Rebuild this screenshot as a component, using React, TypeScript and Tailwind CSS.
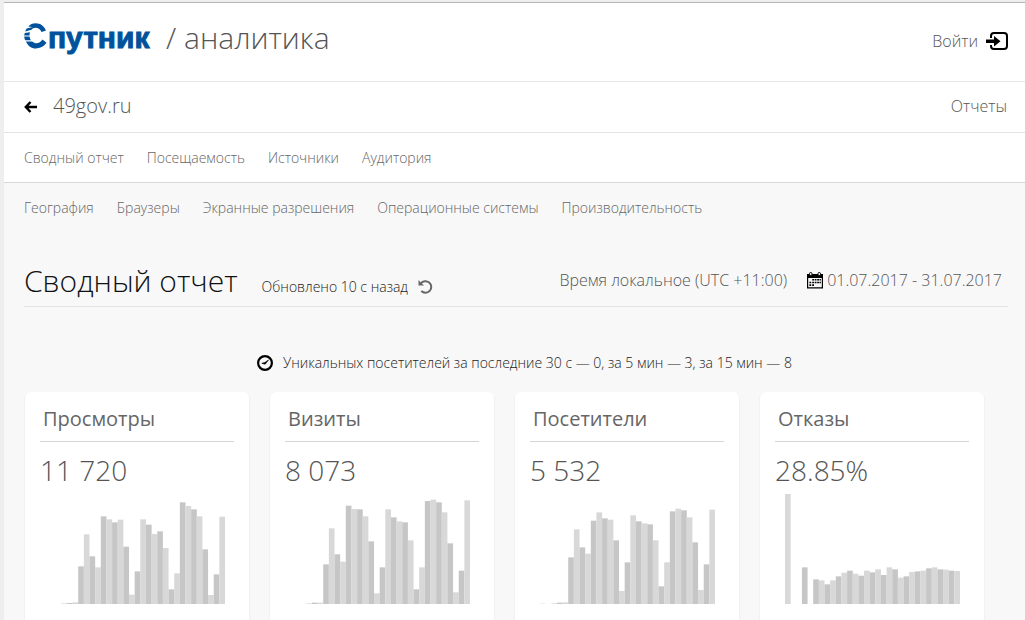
type Metric = {
  title: string;
  value: string;
  bars: number[];
};

const MAX_BAR = 330;

const metrics: Metric[] = [
  {
    title: "Просмотры",
    value: "11 720",
    bars: [
      0, 0, 2, 3, 5, 113, 209, 143, 110, 263, 254, 245, 253, 172, 28, 98, 254,
      238, 210, 218, 168, 44, 92, 305, 294, 284, 263, 164, 27, 89, 262,
    ],
  },
  {
    title: "Визиты",
    value: "8 073",
    bars: [
      0, 0, 2, 4, 4, 119, 227, 149, 127, 295, 285, 284, 263, 188, 32, 110, 284,
      260, 248, 245, 191, 44, 110, 309, 313, 305, 275, 182, 35, 100, 311,
    ],
  },
  {
    title: "Посетители",
    value: "5 532",
    bars: [
      1, 0, 2, 4, 5, 140, 224, 170, 151, 250, 275, 257, 253, 191, 39, 125, 266,
      248, 242, 239, 191, 53, 125, 278, 286, 281, 260, 185, 42, 119, 283,
    ],
  },
  {
    title: "Отказы",
    value: "28.85%",
    bars: [
      330, 0, 0, 110, 0, 74, 71, 59, 71, 83, 94, 100, 91, 85, 100, 95, 104, 87,
      110, 104, 79, 83, 96, 98, 100, 107, 110, 104, 103, 100, 99,
    ],
  },
];

const mainNav = ["Сводный отчет", "Посещаемость", "Источники", "Аудитория"];

const subNav = [
  "География",
  "Браузеры",
  "Экранные разрешения",
  "Операционные системы",
  "Производительность",
];

function Logo() {
  return (
    <a href="#" aria-label="Спутник" className="flex h-[34px] w-32 text-[#00529c]">
      <svg viewBox="0 0 24 34" className="h-[34px] w-6 shrink-0" aria-hidden="true">
        <path
          d="M22 7.500 17.600 9C16 6.200 14 4.800 11.500 4.800 9.500 4.800 8.400 5.600 7.500 6.800L1.300 8.600C1.600 7.500 2 6.500 2.600 5.600L8.500 4 4.200 3.600C6 1.300 8.500 .2 11.700 .2 16.500 .2 20 3 22 7.500Z"
          fill="currentColor"
        />
        <path
          d="M.8 9.900 6 9.300C5.700 10.200 5.500 11.200 5.500 12.400L.2 12.400C.3 11.500 .5 10.600 .8 9.900ZM.2 13.500 5.600 13.500C5.800 14.900 6.200 16.100 6.800 17.200L1.200 17.200C.6 16.100 .3 14.900 .2 13.500ZM1.900 18.400 8.200 18.400C11.500 21.500 16 20.500 18.500 16.500L22.500 19.800C20 23.500 16 25.500 11.700 25.500 7.500 25.500 4 22.800 1.900 18.400Z"
          fill="currentColor"
        />
      </svg>
      <span className="font-['Liberation_Sans',sans-serif] text-[30px] leading-[30px] font-bold [-webkit-text-stroke:1px_#00529c]">
        путник
      </span>
    </a>
  );
}

function LoginIcon() {
  return (
    <svg viewBox="0 0 22 19" className="h-[19px] w-[22px]" aria-hidden="true">
      <path
        d="M5 6V4Q5 1 8 1H18Q21 1 21 4V14Q21 17 18 17H8Q5 17 5 14V13"
        fill="none"
        stroke="#000"
        strokeWidth="2"
      />
      <path d="M0 7.500H8V4L14.500 9.200 8 14.500V11H0Z" fill="#000" />
    </svg>
  );
}

function BackIcon() {
  return (
    <svg viewBox="0 0 13 12" className="h-3 w-[13px]" aria-hidden="true">
      <path d="M6.500 1 1.800 6l4.700 5M2 6h11" fill="none" stroke="#000" strokeWidth="2.400" />
    </svg>
  );
}

function RefreshIcon() {
  return (
    <svg viewBox="0 0 15 15" className="size-[15px]" aria-hidden="true">
      <path
        d="M2.800 4.500A5.800 5.800 0 1 1 3.300 12"
        fill="none"
        stroke="#666"
        strokeWidth="2"
      />
      <path d="M.5 1V6.500H6L4.400 5 2.400 3Z" fill="#666" />
    </svg>
  );
}

function CalendarIcon() {
  return (
    <svg viewBox="0 0 16 17" className="h-[17px] w-4" aria-hidden="true">
      <path d="M0 2H16V16.500H0ZM1.200 6V15.300H14.800V6Z" fill="#000" fillRule="evenodd" />
      <rect x="2.500" y="0.500" width="2.500" height="3" rx="1.200" fill="#f8f8f8" stroke="#000" />
      <rect x="11" y="0.500" width="2.500" height="3" rx="1.200" fill="#f8f8f8" stroke="#000" />
      <path
        d="M5.200 7h1.800v1.600h-1.800zM7.700 7h1.800v1.600h-1.800zM10.200 7h1.800v1.600h-1.800zM12.500 7h1.400v1.600h-1.400zM2.400 9.700h1.800v1.600h-1.800zM5.200 9.700h1.800v1.600h-1.800zM7.700 9.700h1.800v1.600h-1.800zM10.200 9.700h1.800v1.600h-1.800zM12.500 9.700h1.400v1.600h-1.400zM2.400 12.300h1.800v1.600h-1.800zM5.200 12.300h1.800v1.600h-1.800z"
        fill="#000"
      />
    </svg>
  );
}

function ClockIcon() {
  return (
    <svg viewBox="0 0 16 16" className="size-4" aria-hidden="true">
      <circle cx="8" cy="8" r="6.900" fill="none" stroke="#000" strokeWidth="2.200" />
      <path d="M11.500 5 8.200 9.200 4.800 8.300 7.800 7.500Z" fill="#000" stroke="#000" strokeWidth="0.600" />
    </svg>
  );
}

function BarChart({ bars, label }: { bars: number[]; label: string }) {
  return (
    <svg
      viewBox={`0 0 ${bars.length} ${MAX_BAR}`}
      preserveAspectRatio="none"
      className="h-[110px] w-full"
      role="img"
      aria-label={label}
    >
      {bars.map((height, i) => (
        <rect
          key={i}
          x={i}
          y={MAX_BAR - height}
          width="1"
          height={height}
          fill={i % 2 ? "#c6c6c6" : "#d8d8d8"}
        />
      ))}
    </svg>
  );
}

function MetricCard({ title, value, bars }: Metric) {
  return (
    <article className="h-64 rounded-md bg-white px-[15px] pt-3 shadow-[0_1px_2px_rgba(0,0,0,0.1)]">
      <h2 className="border-b border-[#d5d5d5] px-[3px] pb-2 text-[20px] leading-[29px] text-[#666]">
        {title}
      </h2>
      <p className="pt-2.5 text-[28px] leading-9 font-light text-[#555]">{value}</p>
      <div className="mt-1.5 pr-[9px] pl-2.5">
        <BarChart bars={bars} label={title} />
      </div>
    </article>
  );
}

function NavLinks({ items }: { items: string[] }) {
  return (
    <>
      {items.map((item) => (
        <a key={item} href="#" className="whitespace-nowrap hover:text-black">
          {item}
        </a>
      ))}
    </>
  );
}

export default function App() {
  return (
    <div className="h-screen overflow-hidden border-l-4 border-[#eeeeee] bg-[#f8f8f8] font-['Open_Sans',sans-serif] text-[#555]">
      <div className="-ml-1 h-[3px] border-b border-[#b5b5b5] bg-[#eeeeee]" />
      <div className="bg-white">
        <header className="flex h-[79px] items-center justify-between border-b border-[#e8e8e8] pr-[17px] pb-1 pl-5">
          <div className="flex items-center gap-3.5">
            <Logo />
            <span className="pb-1 text-[30px] leading-9 font-light">/ аналитика</span>
          </div>
          <a href="#" className="flex items-center gap-2 pt-0.5 text-[16px] font-light">
            Войти
            <LoginIcon />
          </a>
        </header>
        <div className="flex h-[51px] items-center justify-between border-b border-[#e3e3e3] pr-[18px] pl-5">
          <a href="#" className="flex items-center gap-4 text-[20px] font-light">
            <BackIcon />
            <span className="pb-0.5">49gov.ru</span>
          </a>
          <a href="#" className="pb-0.5 text-[16px] font-light">
            Отчеты
          </a>
        </div>
        <nav className="flex h-[50px] items-center gap-[23px] border-b border-[#d8d8d8] pl-5 text-[14px] font-light text-[#666]">
          <NavLinks items={mainNav} />
        </nav>
      </div>
      <nav className="flex h-[50px] items-center gap-[23px] pb-0.5 pl-5 text-[14px] font-light text-[#666]">
        <NavLinks items={subNav} />
      </nav>

      <main>
        <div className="mr-[17px] ml-5 flex h-[74px] items-end justify-between border-b border-[#e3e3e3] pb-1">
          <div className="flex items-baseline gap-6">
            <h1 className="text-[30px] leading-[42px] font-light text-[#111]">Сводный отчет</h1>
            <div className="flex items-center gap-2.5 text-[14px] font-light text-[#222]">
              Обновлено 10 с назад
              <button type="button" aria-label="Обновить">
                <RefreshIcon />
              </button>
            </div>
          </div>
          <div className="flex items-center gap-5 pr-1.5 pb-2.5 text-[16px] font-light">
            <span>Время локальное (UTC +11:00)</span>
            <button type="button" className="flex items-center gap-1">
              <CalendarIcon />
              01.07.2017 - 31.07.2017
            </button>
          </div>
        </div>

        <p className="flex items-center justify-center gap-2.5 pt-[45px] pb-[19px] pl-5 text-[14px] leading-[21px] font-light text-[#222]">
          <ClockIcon />
          Уникальных посетителей за последние 30 с — 0, за 5 мин — 3, за 15 мин — 8
        </p>

        <section className="grid grid-cols-4 gap-[21px] pr-[41px] pl-[21px]">
          {metrics.map((metric) => (
            <MetricCard key={metric.title} {...metric} />
          ))}
        </section>
      </main>
    </div>
  );
}
